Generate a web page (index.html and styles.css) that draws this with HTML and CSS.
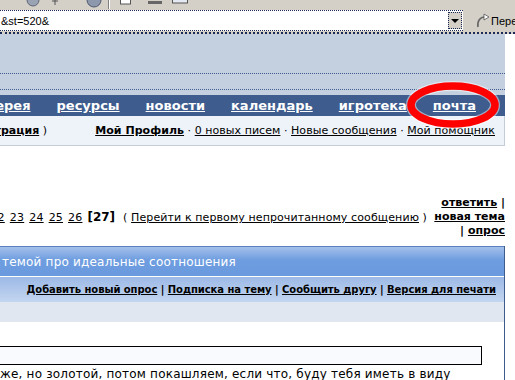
FILE: index.html
```html
<!DOCTYPE html>
<html lang="ru">
<head>
  <meta charset="UTF-8" />
  <link rel="stylesheet" href="styles.css">
</head>
<body>

  <div class="chrome">
    <div class="toolbar">
      <svg width="200" height="9" viewBox="0 0 200 9">
        <path d="M27 0 A6 6 0 0 0 39 0" fill="#9aa3b4" stroke="#5d6677" />
        <path d="M55 0 v5 M52 1 h6" stroke="#555" fill="none" />
        <path d="M87 0 A7 7 0 0 0 101 0" fill="#8d98ac" stroke="#4f5870" />
        <path d="M108.5 0 v9" stroke="#808080" />
        <path d="M109.5 0 v9" stroke="#fff" />
        <rect x="120.5" y="-3" width="10" height="7" fill="#fff" stroke="#555" />
        <path d="M148 1 h14 v3 h-14 z" fill="#666" />
        <rect x="172.5" y="-3" width="15" height="6" fill="#e4e8f0" stroke="#555" />
      </svg>
    </div>
    <div class="addr-row">
      <div class="addr">
        <span class="url">&amp;st=520&amp;</span>
        <span class="drop"><i class="tri"></i></span>
      </div>
      <div class="go">
        <svg width="14" height="15" viewBox="0 0 14 15">
          <path d="M2 14 C1 8 4 4 9 4" stroke="#666" stroke-width="1.6" fill="none" />
          <path d="M8 1 L13 4 L8 7 Z" fill="#fff" stroke="#555" stroke-width="0.8" />
        </svg>
        <span>Перейти</span>
      </div>
    </div>
    <div class="frame-line"></div>
  </div>

  <div class="page">
    <div class="banner"></div>
    <div class="strip"></div>
    <div class="gap"></div>

    <nav class="nav">
      <a href="#">галерея</a>
      <a href="#">ресурсы</a>
      <a href="#">новости</a>
      <a href="#">календарь</a>
      <a href="#">игротека</a>
      <a href="#">почта</a>
    </nav>

    <div class="sub">
      <div class="sub-left"><span>( <a href="#">Выход</a> · <a href="#" class="b">Регистрация</a> )</span></div>
      <div class="sub-right">
        <a href="#" class="b">Мой Профиль</a> · <a href="#">0 новых писем</a> · <a href="#">Новые сообщения</a> · <a href="#">Мой помощник</a>
      </div>
    </div>

    <div class="actions">
      <div class="pages">
        <a href="#" class="pn">20</a><a href="#" class="pn">21</a><a href="#" class="pn">22</a><a href="#" class="pn">23</a><a href="#" class="pn">24</a><a href="#" class="pn">25</a><a href="#" class="pn">26</a><b class="cur">[27]</b><span class="jump">(&nbsp;<a href="#">Перейти к первому непрочитанному сообщению</a>&nbsp;)</span>
      </div>
      <div class="buttons">
        <a href="#">ответить</a> | <a href="#">новая тема</a> | <a href="#">опрос</a>
      </div>
    </div>

    <div class="topic">
      <div class="topic-title">темой про идеальные соотношения</div>
      <div class="topic-links">
        <a href="#">Добавить новый опрос</a>&nbsp;|&nbsp;<a href="#">Подписка на тему</a>&nbsp;|&nbsp;<a href="#">Сообщить другу</a>&nbsp;|&nbsp;<a href="#">Версия для печати</a>
      </div>
      <div class="topic-grey"></div>
      <div class="post">
        <div class="quote"></div>
        <p>же, но золотой, потом покашляем, если что, буду тебя иметь в виду</p>
      </div>
    </div>
  </div>

  <svg class="mark" width="100" height="52" viewBox="0 0 100 52">
    <ellipse cx="49" cy="25" rx="42" ry="19" fill="none" stroke="#fff" stroke-width="10" opacity="0.5" />
    <ellipse cx="49" cy="25" rx="42" ry="19" fill="none" stroke="#f00" stroke-width="7.5" />
  </svg>

</body>
</html>
```

FILE: styles.css
```css
body {
  margin: 0;
  font-family: "DejaVu Sans", Verdana, sans-serif;
  font-size: 11px;
  background: #fff;
  color: #000;
  overflow: hidden;
}

a {
  color: #000;
}

.b {
  font-weight: bold;
}

/* browser chrome */
.chrome {
  background: #d4d0c8;
  font-family: "Liberation Sans", Tahoma, sans-serif;
}
.toolbar {
  height: 9px;
}
.toolbar svg {
  display: block;
}
.addr-row {
  display: flex;
  align-items: center;
  margin-top: 1px;
  height: 21px;
}
.addr {
  width: 463px;
  height: 21px;
  flex-shrink: 0;
  box-sizing: border-box;
  background: #fff;
  border-top: 1px dotted #1c2a5a;
  border-bottom: 1px dotted #1c2a5a;
  display: flex;
  align-items: center;
  justify-content: space-between;
  font-size: 11px;
}
.url {
  padding-left: 1px;
}
.drop {
  width: 12px;
  height: 15px;
  margin-right: 1px;
  border: 1px dotted #1c2a5a;
  background: #d4d0c8;
  display: flex;
  align-items: center;
  justify-content: center;
}
.tri {
  border-left: 4px solid transparent;
  border-right: 4px solid transparent;
  border-top: 4px solid #000;
}
.go {
  display: flex;
  align-items: center;
  flex-shrink: 0;
  gap: 1px;
  margin-left: 13px;
  font-size: 11px;
  white-space: nowrap;
}
.frame-line {
  height: 1px;
  border-bottom: 2px dotted #1c2a5a;
}

/* page */
.page {
  width: 505px;
}
.banner {
  height: 39px;
  background: #c4d0e0;
}
.strip {
  height: 15px;
  background: #c4d0e0;
  border-top: 1px dotted #3e5c8e;
  border-bottom: 1px dotted #3e5c8e;
}
.gap {
  height: 5px;
  background: #c4d0e0;
}

.nav {
  height: 21px;
  background: #3e5c8e;
  display: flex;
  justify-content: flex-end;
  align-items: center;
  gap: 26px;
  padding-right: 29px;
  overflow: hidden;
  white-space: nowrap;
}
.nav a {
  color: #fff;
  font-weight: bold;
  font-size: 13px;
}

.sub {
  height: 29px;
  background: #eef3f9;
  border-right: 1px solid #c4ccd8;
  border-bottom: 1px solid #c4ccd8;
  display: flex;
  align-items: center;
  justify-content: space-between;
  white-space: nowrap;
}
.sub-left {
  width: 47px;
  flex-shrink: 0;
  display: flex;
  justify-content: flex-end;
  overflow: hidden;
}
.sub-right {
  padding-right: 9px;
  letter-spacing: 0.05px;
}

.actions {
  margin-top: 50px;
  display: flex;
  justify-content: flex-end;
  align-items: center;
  overflow: hidden;
  white-space: nowrap;
}
.pages {
  display: flex;
  align-items: baseline;
  justify-content: flex-end;
  flex-shrink: 0;
}
.pn {
  margin-right: 5px;
  letter-spacing: 0.2px;
}
.cur {
  font-size: 12px;
  margin-right: 8px;
}
.jump {
  letter-spacing: 0.1px;
}
.buttons {
  width: 76px;
  flex-shrink: 0;
  margin-left: 2px;
  white-space: normal;
  text-align: right;
  line-height: 14px;
  font-weight: bold;
}

.topic {
  margin-top: 8px;
  border-right: 1px solid #3e5c8e;
}
.topic-title {
  height: 29px;
  border-top: 1px solid #5a7fc0;
  border-bottom: 1px solid #fff;
  background: linear-gradient(#a4c0ea, #6e9de0 45%, #6a9ade);
  color: #fff;
  font-size: 12px;
  letter-spacing: 0.2px;
  display: flex;
  align-items: center;
  padding-left: 2px;
}
.topic-links {
  height: 25px;
  background: linear-gradient(#9cb9e6, #c4d6f0);
  display: flex;
  justify-content: flex-end;
  align-items: center;
  padding-right: 8px;
  font-size: 10px;
  font-weight: bold;
  letter-spacing: -0.05px;
  white-space: nowrap;
}
.topic-grey {
  height: 20px;
  background: #e1e7f0;
}
.post {
  padding-top: 24px;
}
.quote {
  width: 482px;
  height: 19px;
  box-sizing: border-box;
  border: 1px solid #000;
  border-left: 0;
  background: #f8fafd;
}
.post p {
  margin: 2px 0 0;
  font-size: 12px;
  letter-spacing: 0.2px;
  white-space: nowrap;
}

.mark {
  position: absolute;
  left: 404px;
  top: 80px;
}
```
